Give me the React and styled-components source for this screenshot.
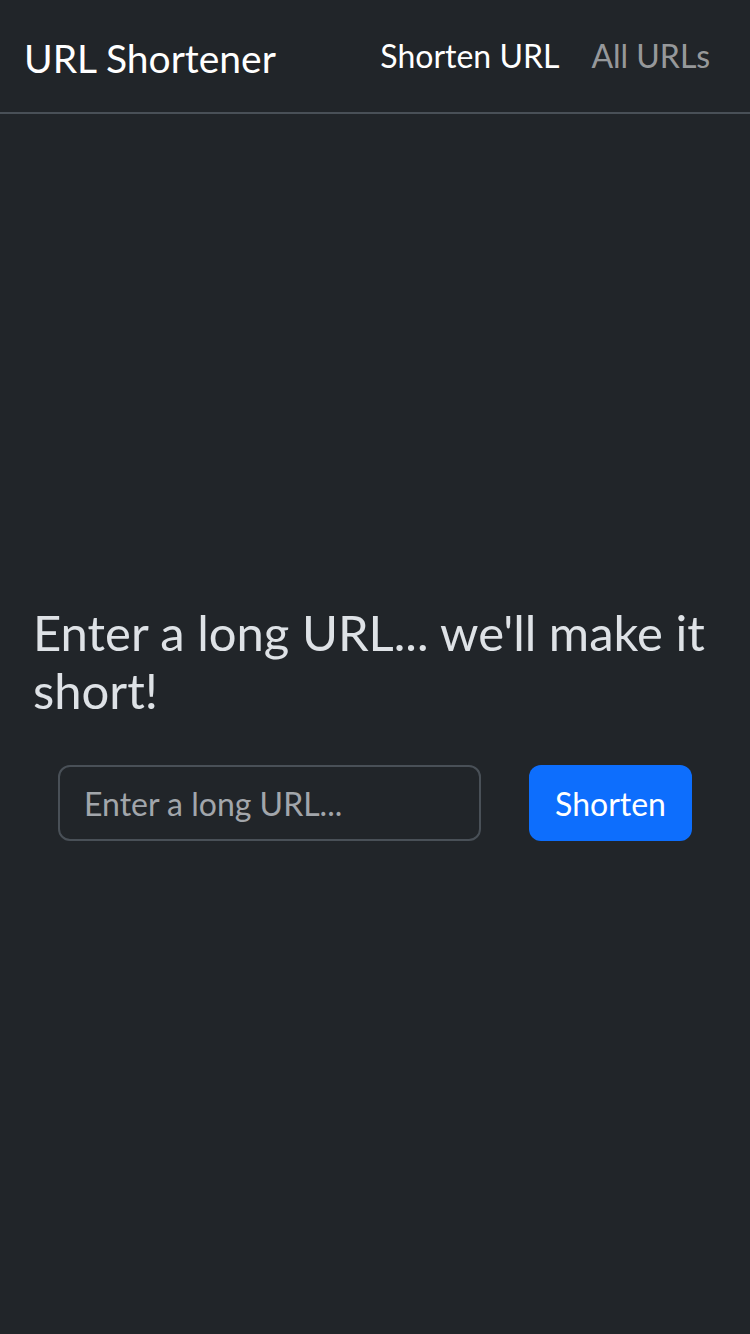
import styled, { createGlobalStyle } from 'styled-components';

const GlobalStyle = createGlobalStyle`
    html, body {
        margin: 0;
        padding: 0;
        background: #212529;
    }
    body {
        font-family: Lato, "Noto Sans", sans-serif;
        color: #dee2e6;
    }
    * { box-sizing: border-box; }
`

const Page = styled.div`
    min-height: 1334px;
    display: flex;
    flex-direction: column;
    background: #212529;
`

const Navbar = styled.nav`
    height: 114px;
    display: flex;
    align-items: center;
    justify-content: space-between;
    padding: 0 24px 2px 24px;
    border-bottom: 2px solid #495057;
`

const Brand = styled.a`
    font-size: 39px;
    color: #fff;
    text-decoration: none;
    padding-top: 6px;
`

const NavLinks = styled.div`
    display: flex;
`

const NavLink = styled.a`
    font-size: 32px;
    padding: 0 16px;
    text-decoration: none;
    color: ${({ active }) => active ? '#fff' : 'rgba(255,255,255,.55)'};
`

const Main = styled.main`
    flex: 1;
    display: flex;
    flex-direction: column;
    justify-content: center;
    padding: 0 24px 4px 33px;
`

const Title = styled.h2`
    margin: 0 0 46px 0;
    font-size: 49px;
    font-weight: 400;
    line-height: 58px;
    color: #dee2e6;
`

const Form = styled.form`
    display: flex;
    gap: 48px;
    padding: 0 34px 0 25px;
`

const Input = styled.input`
    flex: 1;
    min-width: 0;
    height: 76px;
    padding: 0 24px;
    font-family: inherit;
    font-size: 32px;
    color: #dee2e6;
    background: #212529;
    border: 2px solid #495057;
    border-radius: 12px;
    outline: none;
    &::placeholder {
        color: #a2a6ab;
    }
`

const Button = styled.button`
    flex-shrink: 0;
    width: 163px;
    height: 76px;
    font-family: inherit;
    font-size: 32px;
    color: #fff;
    background: #0d6efd;
    border: none;
    border-radius: 12px;
`

export default function App(){
    return <>
        <GlobalStyle />
        <Page>
            <Navbar>
                <Brand href="#">URL Shortener</Brand>
                <NavLinks>
                    <NavLink href="#" active>Shorten URL</NavLink>
                    <NavLink href="#">All URLs</NavLink>
                </NavLinks>
            </Navbar>
            <Main>
                <Title>Enter a long URL... we'll make it short!</Title>
                <Form onSubmit={e => e.preventDefault()}>
                    <Input type="text" placeholder="Enter a long URL..." />
                    <Button type="submit">Shorten</Button>
                </Form>
            </Main>
        </Page>
    </>
}
